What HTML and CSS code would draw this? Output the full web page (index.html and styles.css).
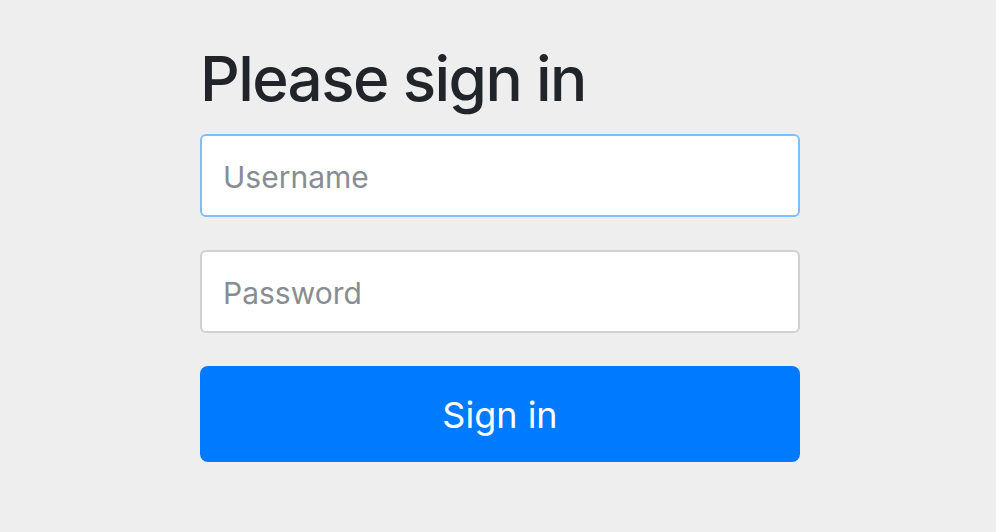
FILE: index.html
```html
<!DOCTYPE html>
<html lang="en">
<head>
    <meta charset="UTF-8">
    <meta name="viewport" content="width=device-width, initial-scale=1.0">
    <title>Please sign in</title>
    <link rel="stylesheet" href="styles.css">
</head>
<body>
    <div class="container">
        <form class="form-signin" method="post" action="/login">
            <h2 class="form-signin-heading">Please sign in</h2>
            <p>
                <input type="text" id="username" name="username" class="form-control focused" placeholder="Username" aria-label="Username">
            </p>
            <p>
                <input type="password" id="password" name="password" class="form-control" placeholder="Password" aria-label="Password">
            </p>
            <button class="btn-primary" type="submit">Sign in</button>
        </form>
    </div>
</body>
</html>
```

FILE: styles.css
```css
body {
    margin: 0;
    background-color: #eeeeee;
    font-family: Inter, "Noto Sans", sans-serif;
    color: #212529;
}

.container {
    width: 604px;
    margin: 0 auto;
    padding-left: 4px;
    box-sizing: border-box;
}

.form-signin {
    padding-top: 42px;
}

.form-signin-heading {
    font-size: 62px;
    font-weight: 500;
    line-height: 1.2;
    margin: 0 0 18px 0;
    letter-spacing: -1.6px;
}

.form-signin p {
    margin: 0 0 33px 0;
}

.form-control {
    display: block;
    width: 100%;
    height: 83px;
    padding: 2px 21px 0 21px;
    box-sizing: border-box;
    font-family: inherit;
    font-size: 30px;
    color: #495057;
    background-color: #fff;
    border: 2px solid #cfd0d1;
    border-radius: 6px;
    outline: none;
}

.form-control::placeholder {
    color: #878d93;
}

.form-control.focused {
    border-color: #80bdff;
}

.btn-primary {
    display: block;
    width: 100%;
    height: 96px;
    padding-top: 2px;
    font-family: inherit;
    font-size: 36px;
    color: #fff;
    background-color: #007bff;
    border: none;
    border-radius: 8px;
    cursor: pointer;
}
```
